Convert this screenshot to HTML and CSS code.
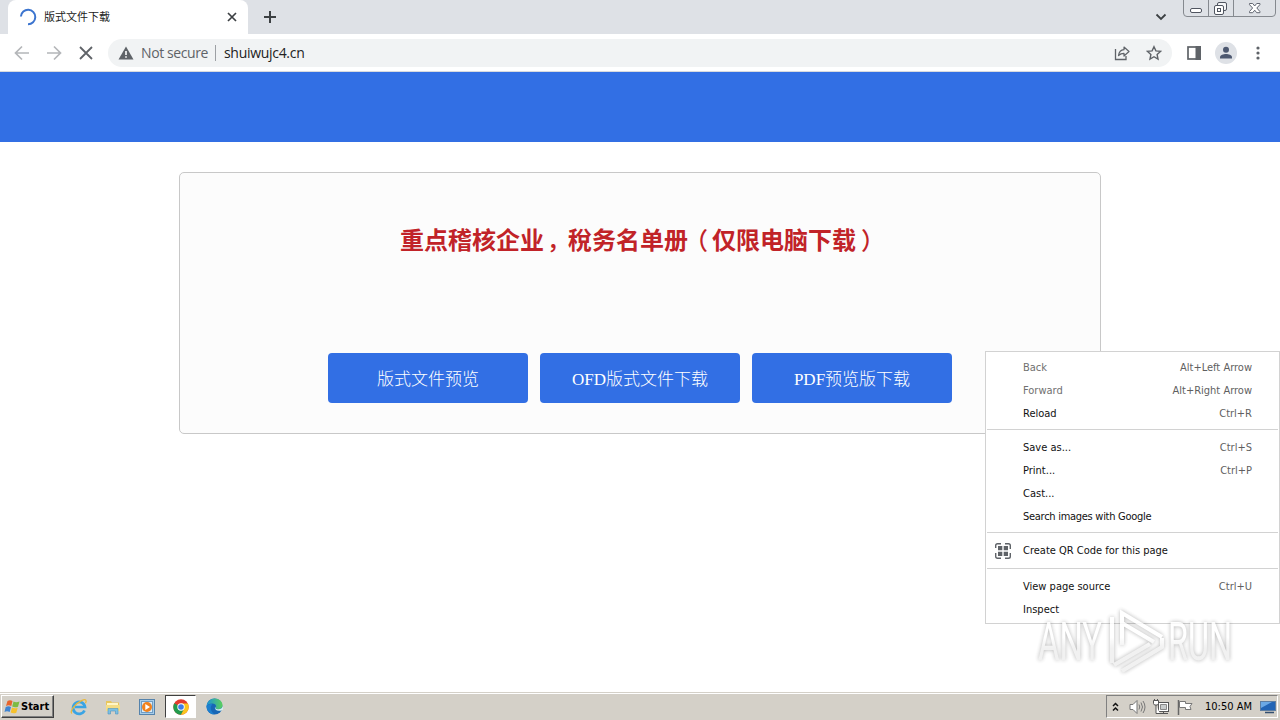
FILE: index.html
```html
<!DOCTYPE html>
<html lang="zh-CN">
  <head>
    <meta charset="UTF-8" />
    <meta name="viewport" content="width=device-width, initial-scale=1.0" />
    <title>版式文件下载</title>
    <link rel="stylesheet" href="styles.css">
  </head>
  <body>
    <div class="tabstrip">
      <div class="tab">
        <svg class="spinner" width="18" height="18" viewBox="0 0 18 18">
          <path d="M1.900 8.500A7.200 7.200 0 1 1 9 16.200" fill="none" stroke="#3b74cf" stroke-width="2" />
        </svg>
        <span class="tab-title">版式文件下载</span>
        <svg width="10" height="10" viewBox="0 0 10 10">
          <path d="M1 1l8 8M9 1l-8 8" stroke="#3c4043" stroke-width="1.7" />
        </svg>
      </div>
      <svg class="new-tab" width="14" height="14" viewBox="0 0 14 14">
        <path d="M7 1v12M1 7h12" stroke="#3c4043" stroke-width="2" />
      </svg>
      <svg class="tab-search" width="12" height="8" viewBox="0 0 12 8">
        <path d="M1.500 1.500L6 6l4.500-4.500" fill="none" stroke="#3c4043" stroke-width="1.8" />
      </svg>
      <div class="window-buttons">
        <svg width="93" height="17" viewBox="0 0 93 17">
          <path d="M.5 0v13q0 3.500 3.500 3.500h85q3.500 0 3.500-3.500V0M25.500 0v16M50.500 0v16" fill="none" stroke="#85898f" />
          <rect x="7.500" y="8.500" width="11" height="4" rx="1.500" fill="#fff" stroke="#505560" />
          <rect x="34.500" y="2.500" width="9" height="8" rx="1.500" fill="#f4f5f7" stroke="#505560" />
          <rect x="31.500" y="5.500" width="9" height="9" rx="1.500" fill="#fff" stroke="#505560" />
          <rect x="34.500" y="8.500" width="3" height="3" fill="#fff" stroke="#505560" />
          <path d="M66.500 3.500h3.200l2 2.500 2-2.500h3.200v1.200L73.800 8l3.100 3.500v1.200h-3.200l-2-2.500-2 2.500h-3.200v-1.200L69.600 8l-3.100-3.300z" fill="#fff" stroke="#606570" />
        </svg>
      </div>
    </div>

    <div class="toolbar">
      <svg class="nav-icon" width="16" height="16" viewBox="0 0 16 16">
        <path d="M15 8H2M8 1.500L1.500 8 8 14.500" fill="none" stroke="#b4b6b9" stroke-width="1.700" />
      </svg>
      <svg class="nav-icon" width="16" height="16" viewBox="0 0 16 16">
        <path d="M1 8h13M8 1.500L14.500 8 8 14.500" fill="none" stroke="#b4b6b9" stroke-width="1.700" />
      </svg>
      <svg class="nav-icon" width="16" height="16" viewBox="0 0 16 16">
        <path d="M2 2l12 12M14 2L2 14" stroke="#5f6368" stroke-width="1.800" />
      </svg>
      <div class="omnibox">
        <svg width="16" height="14" viewBox="0 0 16 14">
          <path d="M8 .5L15.500 13.500H.5z" fill="#5f6368" />
          <path d="M8 5v4M8 10.200v1.600" stroke="#fff" stroke-width="1.600" />
        </svg>
        <span class="security">Not secure</span>
        <span class="divider"></span>
        <span class="url">shuiwujc4.cn</span>
        <svg class="share" width="16" height="16" viewBox="0 0 16 16">
          <path d="M1.500 4v10.500H12V11" fill="none" stroke="#5f6368" stroke-width="1.300" />
          <path d="M4.500 10.500C5 7 7 5 10 4.700V2L15 6.500 10 11V8.300C7.500 8.300 6 9 4.500 10.500z" fill="none" stroke="#5f6368" stroke-width="1.200" stroke-linejoin="round" />
        </svg>
        <svg width="16" height="16" viewBox="0 0 16 16">
          <path d="M8 1.700l1.900 4.200 4.600.5-3.400 3.100.9 4.500L8 11.700 4 14l.9-4.500-3.400-3.100 4.600-.5z" fill="none" stroke="#5f6368" stroke-width="1.400" />
        </svg>
      </div>
      <svg class="side-panel" width="14" height="14" viewBox="0 0 14 14">
        <rect x="1" y="1" width="12" height="12" fill="#fff" stroke="#5f6368" stroke-width="1.700" />
        <path d="M8.500 0H14v14H8.500z" fill="#5f6368" />
      </svg>
      <svg class="profile" width="22" height="22" viewBox="0 0 22 22">
        <circle cx="11" cy="11" r="11" fill="#dee1e6" />
        <circle cx="11" cy="7.800" r="3" fill="#4d5870" />
        <path d="M5 16.500v-1.300c0-2.200 3.500-3.200 6-3.200s6 1 6 3.200v1.300z" fill="#4d5870" />
      </svg>
      <svg width="4" height="14" viewBox="0 0 4 14">
        <g fill="#5f6368">
          <circle cx="2" cy="2" r="1.600" />
          <circle cx="2" cy="7" r="1.600" />
          <circle cx="2" cy="12" r="1.600" />
        </g>
      </svg>
    </div>

    <main class="page">
      <header class="banner"></header>
      <section class="card">
        <h1>重点稽核企业<span class="comma">，</span>稅务名单册<span class="paren-open">（</span>仅限电脑下载<span class="paren-close">）</span></h1>
        <div class="buttons">
          <a class="btn">版式文件预览</a>
          <a class="btn"><span class="latin">OFD</span>版式文件下载</a>
          <a class="btn"><span class="latin">PDF</span>预览版下载</a>
        </div>
      </section>
    </main>

    <div class="taskbar">
      <div class="start">
        <svg width="17" height="16" viewBox="0 0 17 16">
          <path d="M3.500 2Q6 .5 8.500 2L7.300 7Q4.500 5.700 2 7z" fill="#e8642c" />
          <path d="M9.500 2.500Q12 4 15.500 2.500L14 7.700Q11 9 8.200 7.500z" fill="#7dbb42" />
          <path d="M1.700 8Q4.500 6.700 7 8L5.700 13Q3 11.700.5 13z" fill="#3f84d2" />
          <path d="M8 8.500Q10.500 10 13.700 8.700L12.300 13.700Q9.500 15 6.700 13.500z" fill="#f6c12c" />
        </svg>
        <span>Start</span>
      </div>
      <div class="task">
        <svg width="18" height="18" viewBox="0 0 18 18">
          <path d="M14.500 12.500A6 6 0 1 1 15 9H5" fill="none" stroke="#3aa4e4" stroke-width="2.700" />
          <path d="M2 15.500C-1 14 5 5.500 12 2.300c4-1.800 5 .2 3.500 3" fill="none" stroke="#e9b83c" stroke-width="1.300" />
        </svg>
      </div>
      <div class="task">
        <svg width="16" height="16" viewBox="0 0 16 16">
          <path d="M1 2h5l1 1.500h7V12H1z" fill="#e8c65c" />
          <path d="M2 4h11v5H2z" fill="#fff6c7" />
          <path d="M1 6h14v6H1z" fill="#f4dd86" />
          <path d="M3 15V9.500h10V15h-2.500v-3h-5v3z" fill="#7cc0e4" stroke="#4d95c0" stroke-width=".6" />
        </svg>
      </div>
      <div class="task">
        <svg width="16" height="16" viewBox="0 0 16 16">
          <rect x=".5" y=".5" width="15" height="15" fill="#a8cde9" stroke="#5583ac" />
          <rect x="2.500" y="2.500" width="11" height="11" fill="#d9ebf7" stroke="#6f9dc5" />
          <circle cx="8" cy="8" r="5" fill="#f0821e" />
          <path d="M6.300 5l4.700 3-4.700 3z" fill="#fff" />
        </svg>
      </div>
      <div class="task active">
        <svg width="16" height="16" viewBox="0 0 16 16">
          <circle cx="8" cy="8" r="7.700" fill="#e33b2e" />
          <path d="M8 8L1.300 4.200A7.700 7.700 0 0 0 8 15.700l3.400-6z" fill="#229b4d" />
          <path d="M8 4.500h6.900A7.700 7.700 0 0 1 8 15.700L11 10z" fill="#fbc51d" />
          <circle cx="8" cy="8" r="3.700" fill="#fff" />
          <circle cx="8" cy="8" r="2.800" fill="#3d7ce8" />
        </svg>
      </div>
      <div class="task">
        <svg width="17" height="17" viewBox="0 0 17 17">
          <defs>
            <linearGradient id="edge">
              <stop offset="0" stop-color="#1c93d8" />
              <stop offset="1" stop-color="#5ad05b" />
            </linearGradient>
          </defs>
          <circle cx="8.500" cy="8.500" r="8" fill="#1766b5" />
          <path d="M.5 8.500C1 3.500 4.500.5 8.700.5c4.500 0 7.800 3.300 7.800 6.500 0 3-2.500 4.200-4.800 4.200-1.700 0-2.400-.6-2.200-1.200 1.500-1.700.3-4.600-3-4.600C3.500 5.400 1 6.500.5 8.500z" fill="url(#edge)" />
          <path d="M9 8.500c-.7 3 1.500 5 6.500 4l1.500-1V8c-1 3-3.500 3.500-5.300 3.200-1.700 0-2.300-.6-2.200-1.200z" fill="#d4f0ee" />
          <path d="M6.300 6.500c-2.500 2-2 7 2.200 9.800-4.500.4-8-3.800-8-7.800 1-2 4-3 5.800-2z" fill="#1c7fcf" />
        </svg>
      </div>
      <div class="tray">
        <svg width="7" height="10" viewBox="0 0 7 10">
          <path d="M1 4l2.500-2.500L6 4M1 8.500L3.500 6 6 8.500" fill="none" stroke="#111" stroke-width="1.500" />
        </svg>
        <svg class="volume" width="17" height="16" viewBox="0 0 17 16">
          <path d="M1 5.500h3L8 1.500v13L4 10.500H1z" fill="#fff" stroke="#777" />
          <path d="M10 5.500q1.500 2.500 0 5M12 3.500q3 4.500 0 9M14 2q4 6 0 12" fill="none" stroke="#777" />
        </svg>
        <svg class="network" width="17" height="16" viewBox="0 0 17 16">
          <rect x="5.500" y="3.500" width="10" height="9" fill="#fff" stroke="#555" />
          <path d="M7.500 5.500h6v5h-6z" fill="#c8cbcb" stroke="#888" />
          <path d="M7 14.500h8M10.500 12.500v2" stroke="#555" />
          <path d="M.5 1.500h5v3l-1 1.500h-3l-1-1.500zM1.500 0v2M4.500 0v2M3 6v8.500h4" fill="#fff" stroke="#555" />
        </svg>
        <svg class="flag" width="16" height="16" viewBox="0 0 16 16">
          <path d="M1.500 1v15" stroke="#666" stroke-width="1.500" />
          <path d="M2.500 2.500h6v2H15l-2 3 1 3H8.500v-2h-6z" fill="#fff" stroke="#777" />
        </svg>
        <span class="clock">10:50 AM</span>
        <svg width="16" height="14" viewBox="0 0 16 14">
          <rect x=".5" y="1.500" width="15" height="9" fill="#2364b5" stroke="#5d7da2" />
          <path d="M1 2h11L1 8z" fill="#6ba8e5" />
          <path d="M5 12.500h9" stroke="#334f70" stroke-width="1.500" />
        </svg>
      </div>
    </div>

    <div class="menu">
      <div class="item disabled"><span>Back</span><kbd>Alt+Left Arrow</kbd></div>
      <div class="item disabled"><span>Forward</span><kbd>Alt+Right Arrow</kbd></div>
      <div class="item"><span>Reload</span><kbd>Ctrl+R</kbd></div>
      <hr />
      <div class="item"><span>Save as...</span><kbd>Ctrl+S</kbd></div>
      <div class="item"><span>Print...</span><kbd>Ctrl+P</kbd></div>
      <div class="item"><span>Cast...</span></div>
      <div class="item tight"><span>Search images with Google</span></div>
      <hr />
      <div class="item qr">
        <svg width="16" height="16" viewBox="0 0 16 16">
          <path d="M.7 5V2.500Q.7.7 2.500.7H6M10 .7h3.500q1.800 0 1.800 1.800V6M15.300 10v3.500q0 1.800-1.800 1.800H10M6 15.300H2.500Q.7 15.300.7 13.500V10" fill="none" stroke="#5f6368" stroke-width="1.400" />
          <path d="M3 3h4.300v4.300H3zM8.700 3H13v4.300H8.700zM3 8.700h4.300V13H3zM8.700 8.700H13V13H8.700z" fill="#5f6368" />
        </svg>
        <span>Create QR Code for this page</span>
      </div>
      <hr />
      <div class="item"><span>View page source</span><kbd>Ctrl+U</kbd></div>
      <div class="item"><span>Inspect</span></div>
    </div>

    <svg class="watermark" width="210" height="72" viewBox="0 0 210 72">
      <defs>
        <linearGradient id="mark" gradientUnits="userSpaceOnUse" x1="0" y1="0" x2="0" y2="72">
          <stop offset=".45" stop-color="#fff" />
          <stop offset=".6" stop-color="#efefef" />
        </linearGradient>
      </defs>
      <g class="mark-text" fill="url(#mark)">
        <text x="8" y="55" textLength="64" lengthAdjust="spacingAndGlyphs">ANY</text>
        <text x="138" y="55" textLength="64" lengthAdjust="spacingAndGlyphs">RUN</text>
      </g>
      <path class="mark-logo" stroke="url(#mark)" d="M82 12v46M92 40V8l40 24M92 18l32 19M84 60l36-21M92 66l40-24v-9" />
    </svg>
  </body>
</html>
```

FILE: styles.css
```css
* {
  box-sizing: border-box;
}
body {
  margin: 0;
  width: 1280px;
  height: 720px;
  overflow: hidden;
  display: flex;
  flex-direction: column;
  background: #fff;
  font-family: "DejaVu Sans Condensed", "DejaVu Sans", "Noto Sans CJK SC", sans-serif;
  font-size: 11px;
}
svg {
  display: block;
  flex-shrink: 0;
}

/* browser chrome */
.tabstrip {
  height: 34px;
  display: flex;
  align-items: center;
  background: #dee1e6;
}
.tab {
  width: 240px;
  height: 34px;
  margin-left: 8px;
  padding: 0 11px;
  display: flex;
  align-items: center;
  background: #fff;
  border-radius: 8px 8px 0 0;
}
.tab-title {
  flex: 1;
  margin-left: 7px;
  margin-top: -2px;
  font-family: "Noto Sans CJK SC", sans-serif;
  color: #222;
  line-height: 16px;
}
.new-tab {
  margin-left: 15px;
}
.tab-search {
  margin-left: auto;
}
.window-buttons {
  align-self: flex-start;
  margin: 0 4px 0 16px;
}
.toolbar {
  height: 38px;
  padding: 0 20px 0 14px;
  display: flex;
  align-items: center;
  border-bottom: 1px solid #d8dade;
}
.nav-icon {
  margin-right: 16px;
}
.omnibox {
  width: 1064px;
  height: 28px;
  margin-left: -2px;
  padding: 0 10px;
  display: flex;
  align-items: center;
  border-radius: 14px;
  background: #f1f3f4;
  font-family: "Open Sans", sans-serif;
  font-size: 14px;
  letter-spacing: -0.4px;
}
.security {
  margin-left: 7px;
  color: #5f6368;
}
.divider {
  width: 1px;
  height: 16px;
  margin: 0 8px 0 7px;
  background: #9da0a4;
}
.url {
  color: #222;
  letter-spacing: -0.3px;
}
.share {
  margin: 0 16px 0 auto;
}
.side-panel {
  margin-left: 15px;
}
.profile {
  margin: 0 19px 0 14px;
}

/* page content */
.page {
  flex: 1;
}
.banner {
  height: 70px;
  background: #326fe4;
}
.card {
  width: 922px;
  height: 262px;
  margin: 30px auto 0 179px;
  padding-top: 48px;
  border: 1px solid #c8c8c8;
  border-radius: 5px;
  background: #fcfcfc;
}
.card h1 {
  margin: 0;
  padding-left: 220px;
  font: bold 24px/36px "Noto Sans CJK SC", sans-serif;
  color: #c12328;
  white-space: nowrap;
}
.comma,
.paren-open,
.paren-close {
  display: inline-block;
  width: 24px;
  font-weight: 500;
}
.comma {
  text-indent: 3px;
}
.paren-open {
  text-indent: -4px;
}
.paren-close {
  text-indent: 5px;
}
.buttons {
  display: flex;
  gap: 12px;
  margin: 96px 0 0 148px;
}
.btn {
  width: 200px;
  height: 50px;
  border-radius: 4px;
  background: #326fe4;
  color: #fff;
  font: 300 17px/49px "Noto Sans CJK SC", sans-serif;
  text-align: center;
}
.latin {
  font-family: "Liberation Serif", serif;
}

/* context menu */
.menu {
  position: absolute;
  left: 985px;
  top: 351px;
  width: 295px;
  height: 273px;
  padding-top: 4px;
  background: #fff;
  border: 1px solid #d2d2d2;
  color: #111;
}
.item {
  height: 23px;
  padding: 0 27px 0 37px;
  display: flex;
  align-items: center;
  justify-content: space-between;
}
.item kbd {
  font: inherit;
  color: #5f5f5f;
}
.disabled {
  color: #707070;
}
.tight {
  letter-spacing: -0.28px;
}
.menu hr {
  height: 1px;
  margin: 4px 1px 6px;
  border: 0;
  background: #d2d2d2;
}
.qr {
  height: 25px;
  padding: 0 27px 2px 9px;
  justify-content: flex-start;
  gap: 12px;
}

/* taskbar */
.taskbar {
  height: 28px;
  padding-top: 3px;
  display: flex;
  align-items: flex-start;
  background: linear-gradient(#d4d0c8 1px, #fff 1px, #fff 2px, #d4d0c8 2px);
}
.start {
  width: 53px;
  height: 23px;
  margin: 0 9px 0 1px;
  padding-left: 2px;
  display: flex;
  align-items: center;
  border: 1px solid;
  border-color: #fff #404040 #404040 #fff;
  box-shadow: inset -1px -1px #808080;
  font-weight: bold;
}
.task {
  width: 31px;
  height: 23px;
  margin-right: 3px;
  display: flex;
  align-items: center;
  justify-content: center;
}
.active {
  background: #fff;
  border: 1px solid;
  border-color: #404040 #fff #fff #404040;
}
.tray {
  width: 172px;
  height: 23px;
  margin: 0 2px 0 auto;
  padding: 0 1px 0 5px;
  display: flex;
  align-items: center;
  border: 1px solid;
  border-color: #808080 #fff #fff #808080;
}
.volume {
  margin-left: 10px;
}
.network {
  margin: 0 7px;
}
.clock {
  margin: 0 8px 0 auto;
  white-space: nowrap;
}

.watermark {
  position: absolute;
  left: 1030px;
  top: 605px;
  filter: drop-shadow(0 0 2px rgba(0, 0, 0, 0.35));
  opacity: 0.85;
}
.mark-text {
  font: 53px Roboto, sans-serif;
}
.mark-logo {
  fill: none;
  stroke-width: 4;
}
```
